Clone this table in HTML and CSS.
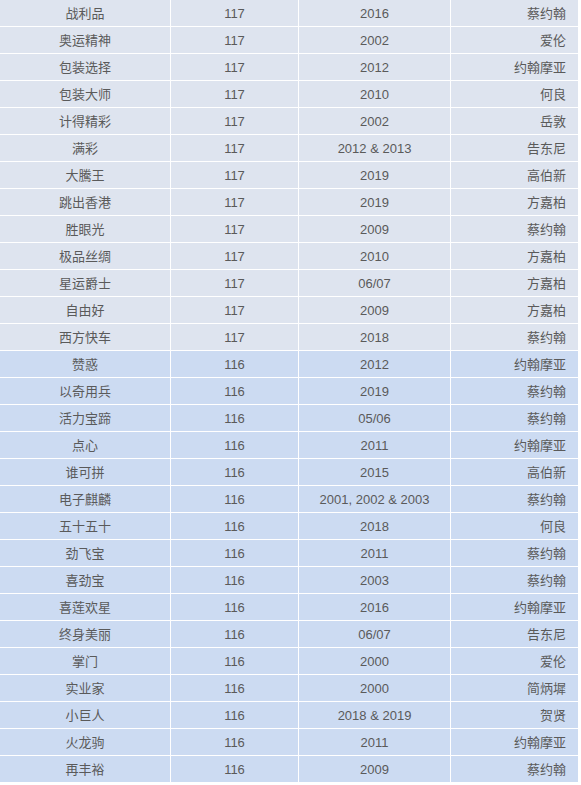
FILE: index.html
```html
<!DOCTYPE html>
<html lang="zh">
<head>
<meta charset="utf-8">
<link rel="stylesheet" href="styles.css">
</head>
<body>
<div class="table">
  <div class="row a"><div class="c">战利品</div><div class="c">117</div><div class="c">2016</div><div class="c r">蔡约翰</div></div>
  <div class="row a"><div class="c">奥运精神</div><div class="c">117</div><div class="c">2002</div><div class="c r">爱伦</div></div>
  <div class="row a"><div class="c">包装选择</div><div class="c">117</div><div class="c">2012</div><div class="c r">约翰摩亚</div></div>
  <div class="row a"><div class="c">包装大师</div><div class="c">117</div><div class="c">2010</div><div class="c r">何良</div></div>
  <div class="row a"><div class="c">计得精彩</div><div class="c">117</div><div class="c">2002</div><div class="c r">岳敦</div></div>
  <div class="row a"><div class="c">满彩</div><div class="c">117</div><div class="c">2012 &amp; 2013</div><div class="c r">告东尼</div></div>
  <div class="row a"><div class="c">大騰王</div><div class="c">117</div><div class="c">2019</div><div class="c r">高伯新</div></div>
  <div class="row a"><div class="c">跳出香港</div><div class="c">117</div><div class="c">2019</div><div class="c r">方嘉柏</div></div>
  <div class="row a"><div class="c">胜眼光</div><div class="c">117</div><div class="c">2009</div><div class="c r">蔡约翰</div></div>
  <div class="row a"><div class="c">极品丝绸</div><div class="c">117</div><div class="c">2010</div><div class="c r">方嘉柏</div></div>
  <div class="row a"><div class="c">星运爵士</div><div class="c">117</div><div class="c">06/07</div><div class="c r">方嘉柏</div></div>
  <div class="row a"><div class="c">自由好</div><div class="c">117</div><div class="c">2009</div><div class="c r">方嘉柏</div></div>
  <div class="row a"><div class="c">西方快车</div><div class="c">117</div><div class="c">2018</div><div class="c r">蔡约翰</div></div>
  <div class="row b"><div class="c">赞惑</div><div class="c">116</div><div class="c">2012</div><div class="c r">约翰摩亚</div></div>
  <div class="row b"><div class="c">以奇用兵</div><div class="c">116</div><div class="c">2019</div><div class="c r">蔡约翰</div></div>
  <div class="row b"><div class="c">活力宝蹄</div><div class="c">116</div><div class="c">05/06</div><div class="c r">蔡约翰</div></div>
  <div class="row b"><div class="c">点心</div><div class="c">116</div><div class="c">2011</div><div class="c r">约翰摩亚</div></div>
  <div class="row b"><div class="c">谁可拼</div><div class="c">116</div><div class="c">2015</div><div class="c r">高伯新</div></div>
  <div class="row b"><div class="c">电子麒麟</div><div class="c">116</div><div class="c">2001, 2002 &amp; 2003</div><div class="c r">蔡约翰</div></div>
  <div class="row b"><div class="c">五十五十</div><div class="c">116</div><div class="c">2018</div><div class="c r">何良</div></div>
  <div class="row b"><div class="c">劲飞宝</div><div class="c">116</div><div class="c">2011</div><div class="c r">蔡约翰</div></div>
  <div class="row b"><div class="c">喜劲宝</div><div class="c">116</div><div class="c">2003</div><div class="c r">蔡约翰</div></div>
  <div class="row b"><div class="c">喜莲欢星</div><div class="c">116</div><div class="c">2016</div><div class="c r">约翰摩亚</div></div>
  <div class="row b"><div class="c">终身美丽</div><div class="c">116</div><div class="c">06/07</div><div class="c r">告东尼</div></div>
  <div class="row b"><div class="c">掌门</div><div class="c">116</div><div class="c">2000</div><div class="c r">爱伦</div></div>
  <div class="row b"><div class="c">实业家</div><div class="c">116</div><div class="c">2000</div><div class="c r">简炳墀</div></div>
  <div class="row b"><div class="c">小巨人</div><div class="c">116</div><div class="c">2018 &amp; 2019</div><div class="c r">贺贤</div></div>
  <div class="row b"><div class="c">火龙驹</div><div class="c">116</div><div class="c">2011</div><div class="c r">约翰摩亚</div></div>
  <div class="row b"><div class="c">再丰裕</div><div class="c">116</div><div class="c">2009</div><div class="c r">蔡约翰</div></div>
</div>
</body>
</html>
```
FILE: styles.css
```css
html, body {
  margin: 0;
  padding: 0;
  background: #ffffff;
}
body {
  font-family: "Liberation Sans", "Noto Sans CJK SC", sans-serif;
  font-size: 13px;
  color: #5a5a5a;
}
.table {
  display: flex;
  flex-direction: column;
  gap: 1px;
  width: 578px;
  background: #ffffff;
}
.row {
  display: grid;
  grid-template-columns: 170px 127px 151px 127px;
  column-gap: 1px;
  height: 26px;
}
.c {
  display: flex;
  align-items: center;
  justify-content: center;
  padding-top: 2px;
  box-sizing: border-box;
  line-height: 24px;
  white-space: nowrap;
}
.c.r {
  justify-content: flex-end;
  padding-right: 12px;
}
.row.a .c {
  background: #dee4ef;
}
.row.b .c {
  background: #ccdbf2;
}
```
